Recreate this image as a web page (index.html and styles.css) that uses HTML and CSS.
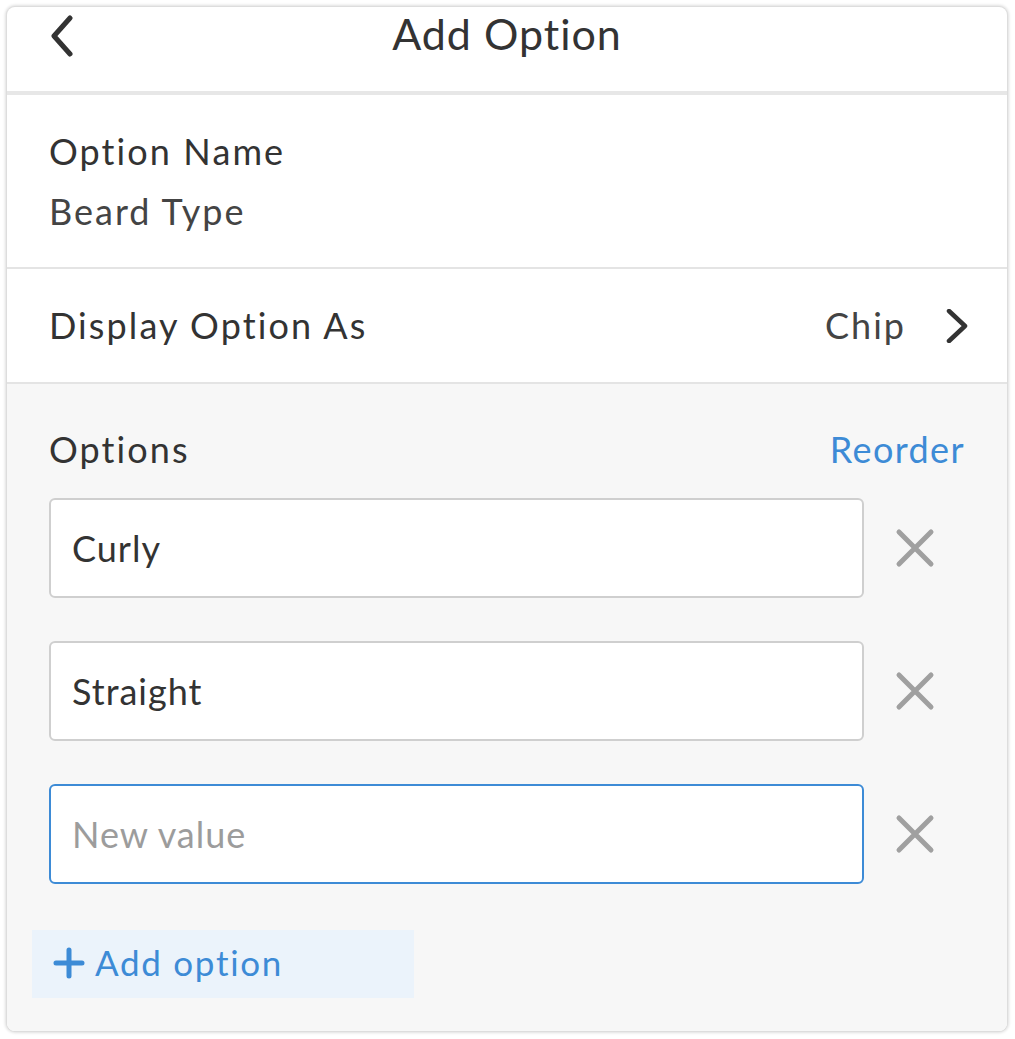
FILE: index.html
```html
<!DOCTYPE html>
<html lang="en">
<head>
<meta charset="utf-8">
<title>Add Option</title>
<link rel="stylesheet" href="styles.css">
</head>
<body>
<div class="card">
  <header class="topbar">
    <div class="topbar-left">
      <svg class="back" width="30" height="45" viewBox="0 0 30 45"><path d="M20 3 L4 21 L20 39" fill="none" stroke="#333" stroke-width="5" stroke-linecap="round" stroke-linejoin="round"/></svg>
    </div>
    <h1 class="title">Add Option</h1>
    <div></div>
  </header>
  <section class="name-section">
    <div class="label">Option Name</div>
    <div class="value">Beard Type</div>
  </section>
  <section class="display-row">
    <div class="label">Display Option As</div>
    <div class="display-right">
      <span class="value">Chip</span>
      <svg class="chev" width="22" height="34" viewBox="0 0 22 34"><path d="M3 2 L19 17 L3 32" fill="none" stroke="#333" stroke-width="4.5" stroke-linecap="round" stroke-linejoin="round"/></svg>
    </div>
  </section>
  <section class="options">
    <div class="options-head">
      <span class="label">Options</span>
      <span class="link">Reorder</span>
    </div>
    <div class="opt-row">
      <div class="field">Curly</div>
      <div class="remove"><svg width="40" height="40" viewBox="0 0 40 40"><path d="M4 4 L36 36 M36 4 L4 36" stroke="#a0a0a0" stroke-width="5" stroke-linecap="round"/></svg></div>
    </div>
    <div class="opt-row">
      <div class="field">Straight</div>
      <div class="remove"><svg width="40" height="40" viewBox="0 0 40 40"><path d="M4 4 L36 36 M36 4 L4 36" stroke="#a0a0a0" stroke-width="5" stroke-linecap="round"/></svg></div>
    </div>
    <div class="opt-row">
      <div class="field field-active placeholder">New value</div>
      <div class="remove"><svg width="40" height="40" viewBox="0 0 40 40"><path d="M4 4 L36 36 M36 4 L4 36" stroke="#a0a0a0" stroke-width="5" stroke-linecap="round"/></svg></div>
    </div>
    <div class="add-btn">
      <svg class="plus" width="32" height="32" viewBox="0 0 32 32"><path d="M16 3 V29 M3 16 H29" stroke="#3d8bd6" stroke-width="5" stroke-linecap="round"/></svg>
      <span class="add-text">Add option</span>
    </div>
  </section>
</div>
</body>
</html>
```

FILE: styles.css
```css
* { box-sizing: border-box; }
html, body { margin: 0; padding: 0; background: #ffffff; }
body {
  font-family: "Lato", "Liberation Sans", sans-serif;
  color: #333333;
  padding: 7px 8px 8px 7px;
}
.card {
  width: 1000px;
  height: 1024px;
  border-radius: 8px;
  overflow: hidden;
  background: #ffffff;
  box-shadow: 0 0 0 1px #dddddd, 0 0 3px 2px rgba(0,0,0,0.13);
  display: flex;
  flex-direction: column;
}
.topbar {
  height: 88px;
  border-bottom: 4px solid #e7e7e7;
  display: grid;
  grid-template-columns: 1fr auto 1fr;
  align-items: start;
}
.topbar-left { padding: 8px 0 0 43px; }
.back { display: block; }
.title {
  margin: 0;
  font-weight: 400;
  font-size: 43px;
  line-height: 52px;
  padding-top: 1px;
  letter-spacing: 1px;
  color: #333;
}
.label { font-size: 36px; line-height: 43px; color: #333; letter-spacing: 2.1px; }
.value { font-size: 36px; line-height: 43px; color: #444; letter-spacing: 2px; }
.name-section {
  padding: 35px 42px 0;
  height: 174px;
  border-bottom: 2px solid #e4e4e4;
  display: flex;
  flex-direction: column;
  gap: 17px;
}
.display-row {
  height: 115px;
  padding: 0 42px;
  border-bottom: 2px solid #e4e4e4;
  display: flex;
  align-items: center;
  justify-content: space-between;
}
.display-right { display: flex; align-items: center; gap: 40px; }
.display-right .chev { margin-right: -3px; }
.options {
  flex: 1;
  background: #f7f7f7;
  padding: 44px 42px 0;
}
.options-head {
  display: flex;
  justify-content: space-between;
  align-items: baseline;
  margin-bottom: 27px;
}
.link { color: #3d8bd6; font-size: 36px; line-height: 43px; letter-spacing: 1.4px; }
.opt-row {
  display: flex;
  align-items: center;
  margin-bottom: 43px;
}
.field {
  flex: 1;
  height: 100px;
  background: #fff;
  border: 2px solid #cfcfcf;
  border-radius: 6px;
  padding: 0 21px;
  display: flex;
  align-items: center;
  font-size: 36px;
  letter-spacing: 1px;
  color: #333;
}
.field-active { border-color: #3d8bd6; }
.placeholder { color: #9c9c9c; }
.remove {
  width: 101px;
  display: flex;
  justify-content: center;
  align-items: center;
}
.remove svg { display: block; }
.add-btn {
  margin: 46px 0 0 -17px;
  width: 382px;
  height: 68px;
  background: #ebf3fb;
  color: #3d8bd6;
  display: flex;
  align-items: center;
  gap: 10px;
  padding-left: 21px;
  font-size: 35px;
  letter-spacing: 1.7px;
}
.add-text { line-height: 43px; margin-top: -4px; }
.plus { display: block; margin-top: -2px; }
```
